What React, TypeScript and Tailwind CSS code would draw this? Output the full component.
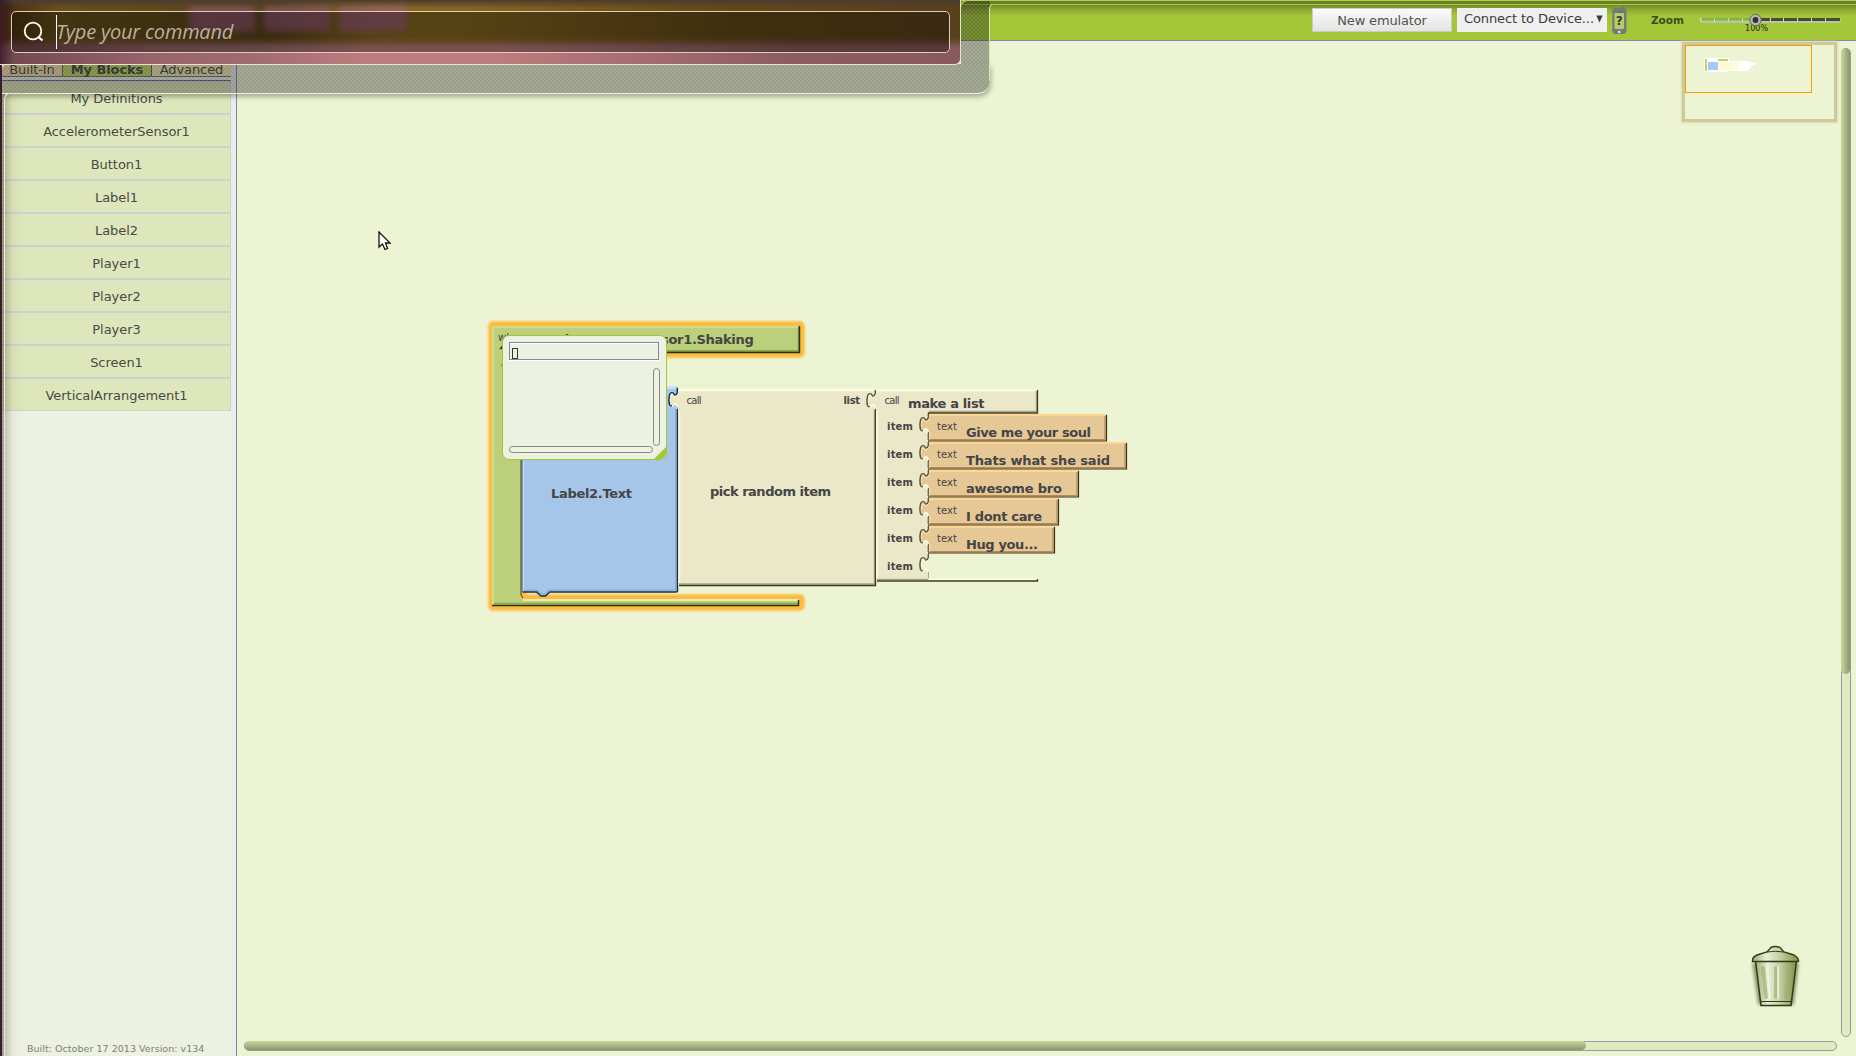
import React from "react";

const drawers = [
  "My Definitions",
  "AccelerometerSensor1",
  "Button1",
  "Label1",
  "Label2",
  "Player1",
  "Player2",
  "Player3",
  "Screen1",
  "VerticalArrangement1",
];

const items = [
  { label: "Give me your soul", right: 1106, width: 125 },
  { label: "Thats what she said", right: 1126, width: 144 },
  { label: "awesome bro", right: 1078, width: 96 },
  { label: "I dont care", right: 1058, width: 76 },
  { label: "Hug you...", right: 1054, width: 72 },
];

const dots =
  "bg-[radial-gradient(circle_at_1px_1px,rgba(255,255,255,0.09)_0.8px,transparent_1px),radial-gradient(circle_at_3px_3px,rgba(255,255,255,0.09)_0.8px,transparent_1px)] bg-[length:4px_4px]";

function Header() {
  return (
    <header className="flex h-[41px] w-full shrink-0 items-start justify-end border-b border-[#7b8a9c] bg-[#a4c639] bg-[linear-gradient(#b1d24a_0px,#b1d24a_1px,#6b7f2b_1px,#6b7f2b_4px,#a9cc42_4px,#a9cc42_5px,#72892b_5px,#8fad33_10px,#a4c639_16px)] pt-[8px] pr-[13px]">
      <button className="h-6 w-[140px] border border-[#c9cdc0] bg-gradient-to-b from-[#fafafa] to-[#e4e4e4] text-[13px] leading-[23px] tracking-[-0.15px] text-[#50524f]">
        New emulator
      </button>
      <div className="ml-[5px] flex h-6 w-[150px] items-center justify-between bg-[#efefef] pr-[4px] pb-[3px] pl-[7px] text-[13px] whitespace-nowrap text-[#3c3c3c]">
        <span className="tracking-[-0.1px]">Connect to Device...</span>
        <svg width="7" height="8" viewBox="0 0 7 8">
          <path d="M0.3 0.5h6.4L3.5 7.5z" fill="#3c3c3c" />
        </svg>
      </div>
      <svg className="-mt-[2px] ml-[5px]" width="15" height="28" viewBox="0 0 15 28">
        <path d="M2 2H10V0.5H13V2.2L14.5 4V25.5L12.5 28H2L0.3 25.5V4Z" fill="#777a74" />
        <rect x="2.5" y="7" width="9.5" height="16" rx="1" fill="#b4cd6a" />
        <path d="M7 6h1M9 6h1" stroke="#444" />
        <circle cx="7.3" cy="26" r="1.3" fill="#e8ece0" />
        <text x="7.2" y="19" textAnchor="middle" fontSize="12" fontWeight="bold" fill="#35392c">?</text>
      </svg>
      <span className="mt-[5px] ml-[24px] w-[32px] text-[10.5px] leading-[15px] font-bold text-[#3f4b20]">Zoom</span>
      <svg className="ml-[16px]" width="144" height="26" viewBox="1699 8 144 26">
        <rect x="1700" y="18" width="141" height="5" rx="2.5" fill="#b9c59b" />
        <rect x="1702" y="18" width="52" height="2.500" fill="#84b440" />
        <rect x="1755" y="18" width="85" height="3" fill="#45483f" />
        <path d="M1700.500 18v4M1714.500 18v4M1728.500 18v4M1742.500 18v4M1770.500 18v4M1783.500 18v4M1797.500 18v4M1811.500 18v4M1825.500 18v4" stroke="#cfdaaf" />
        <text x="1745" y="31" fontSize="8" textLength="23" fill="#252c14">100%</text>
        <circle cx="1755.500" cy="20" r="5.700" fill="#b6b8b2" stroke="#666961" />
        <circle cx="1755.500" cy="20" r="2.900" fill="#30302f" />
      </svg>
    </header>
  );
}

function Sidebar() {
  return (
    <aside className="flex w-[231px] shrink-0 flex-col bg-[#edf1e0] pl-[2px]">
      <div className="flex h-9 items-end border-b border-[#74768a] text-[13px] leading-[23px] tracking-[-0.1px] text-[#494a44]">
        <div className="h-[18px] w-[60px] bg-[#f3dfae] text-center">Built-In</div>
        <div className="h-[18px] w-[90px] border-x border-[#66685c] bg-[#c0da67] text-center font-bold">My Blocks</div>
        <div className="h-[18px] flex-1 bg-[#f3e8b4] text-center">Advanced</div>
      </div>
      <div className="h-1 border-b border-[#74768a] bg-[#edf1e0]" />
      <ul>
        {drawers.map((d) => (
          <li
            key={d}
            className="h-[33px] border border-l-0 border-[#cfd1cf] bg-[#dee7bb] pt-[1px] pl-[1px] text-center text-[13px] leading-[31px] tracking-[-0.04px] text-[#484a45]"
          >
            {d}
          </li>
        ))}
      </ul>
      <p className="mt-auto pl-[25px] text-[9.5px] leading-[14px] tracking-[0.04px] whitespace-nowrap text-[#7c7f78]">
        Built: October 17 2013 Version: v134
      </p>
    </aside>
  );
}

/* Puzzle-shaped connector hanging left of the edge x, starting at y. */
function Plug({ x, y, fill, light = "#fffbe0", dark = "#55523c" }: { x: number; y: number; fill: string; light?: string; dark?: string }) {
  return (
    <g transform={`translate(${x} ${y})`} fill="none">
      <path d="M1 1V4Q0 7-2.500 6.500Q-4 4-6 4Q-8 5-8 9V12Q-8 17-5.500 17Q-4.500 13.500-2 14Q0 15 1 18Z" fill={fill} />
      <path d="M0.300 18Q-0.500 15-2 14.800Q-4 15-4.500 18" stroke={light} strokeWidth="1.500" />
      <path d="M0.300 0V3.500Q-0.500 6.500-2.500 6L-3.500 4Q-6.500 2.500-7.500 6Q-8.700 12-7.500 15.500Q-6.500 17.500-5 16.500" stroke={dark} strokeWidth="1.300" />
      <path d="M1.200 5Q-0.500 8-3 7.500Q-5 4.500-6.300 7V12" stroke={light} strokeWidth="0.900" opacity="0.700" />
    </g>
  );
}

function Blocks() {
  const bold = { fontWeight: "bold", fontSize: 13 } as const;
  return (
    <svg className="absolute top-[269px] left-[243px]" width="680" height="310" viewBox="480 310 680 310">
      <defs>
        <filter id="glow" x="-5%" y="-5%" width="110%" height="110%">
          <feGaussianBlur stdDeviation="0.9" />
        </filter>
      </defs>
      <path d="M493 326H800V353H522V599H800V606H493Z" fill="none" stroke="#fdbb3d" strokeWidth="9.500" strokeLinejoin="round" filter="url(#glow)" />
      <path d="M492 326H800V352H521V599H799V605H492Z" fill="#bccf7b" />
      <path d="M493 605V327H799" fill="none" stroke="#d2e293" strokeWidth="1.500" />
      <path d="M523 600H798" stroke="#e2edb4" strokeWidth="2" />
      <path d="M494 603.500H798" stroke="#8ea655" strokeWidth="1.500" />
      <path d="M798.500 327V351H640" fill="none" stroke="#7f984a" strokeWidth="1.500" />
      <path d="M799.500 326V352.500H640M492 605.500H798.500V600" fill="none" stroke="#26300c" strokeWidth="1.400" />
      <path d="M521 455V595L523 598" fill="none" stroke="#3c4a1c" />
      <g fill="#454545">
        <text x="498" y="340.500" fontSize="10">when</text>
        <text x="753.500" y="344" textAnchor="end" letterSpacing="-0.3" {...bold}>AccelerometerSensor1.Shaking</text>
        <text x="501" y="367.500" fontSize="10">do</text>
      </g>
      <path d="M499.500 349L504 343V349Z" fill="#251600" stroke="#d14716" strokeWidth="0.400" />

      <path d="M522 388Q522 386 524 386H676Q678 386 678 388V592H550L545 596H541L536 592H522Z" fill="#a6c6e9" />
      <path d="M660 387.500H676" stroke="#c3e0ff" strokeWidth="3" />
      <path d="M523.500 450V591" stroke="#c4ddf6" />
      <path d="M676 409V590H549L545 594H541L537 590H524" fill="none" stroke="#7fa3cb" strokeWidth="1.200" />
      <path d="M677.500 388V392M677.500 409V591.500Q677 592 675 592H550L545.500 596H541L536.500 592H522.500" fill="none" stroke="#1c2c42" strokeWidth="1.400" />
      <path d="M522 450V592" stroke="#4a6789" />

      <rect x="678" y="389" width="198" height="197" fill="#ebe7c9" />
      <path d="M678 390H875" stroke="#fffbe0" strokeWidth="2.500" />
      <path d="M679.500 410V583" stroke="#f8f4da" strokeWidth="1.500" />
      <path d="M679 584H874.500V410" fill="none" stroke="#aaa587" strokeWidth="1.500" />
      <path d="M679 585.500H875.500V409" fill="none" stroke="#3e3b2a" strokeWidth="1.300" />

      <path d="M876 390H1038V413H929V579H1038V581H876Z" fill="#ebe7c9" />
      <path d="M876 390.500H1037" stroke="#fffbe0" strokeWidth="2" />
      <path d="M877 410V579M929 579.500H1037" stroke="#fffbe0" strokeWidth="1.500" />
      <path d="M1036.500 391V411.500H929M877 579.500H928" fill="none" stroke="#aaa587" strokeWidth="1.500" />
      <path d="M1037.500 390V413H928.500V415M877 581H1037.500V579" fill="none" stroke="#3e3b2a" strokeWidth="1.300" />

      <Plug x={677} y={389} fill="#ebe7c9" dark="#1c2c42" />
      <Plug x={875} y={390} fill="#ebe7c9" />

      {items.map((it, i) => {
        const y = 414 + i * 28;
        return (
          <g key={it.label}>
            <path d={`M928.500 ${y + 17}V${y + 28}`} stroke="#6e6b56" />
            <path d={`M927.500 ${y + 19}V${y + 26}`} stroke="#b9b598" />
            <rect x="929" y={y} width={it.right - 928} height="27" fill="#e6c796" />
            <path d={`M929 ${y + 1}H${it.right}`} stroke="#ffd58f" strokeWidth="2" />
            <path d={`M930 ${y + 18}V${y + 25}`} stroke="#f5dcaf" />
            <path d={`M930 ${y + 25.5}H${it.right - 1}V${y + 2}`} fill="none" stroke="#b18a55" strokeWidth="1.200" />
            <path d={`M929 ${y + 27}H${it.right + 0.5}V${y + 1}`} fill="none" stroke="#3e2e13" strokeWidth="1.200" />
            <Plug x={928} y={y} fill="#e6c796" />
            <g fill="#454545">
              <text x="937" y={y + 15.5} fontSize="10" textLength="20">text</text>
              <text x="966" y={y + 23} textLength={it.width} {...bold}>{it.label}</text>
            </g>
          </g>
        );
      })}
      <Plug x={928} y={554} fill="#edf4d4" />
      <path d="M928.500 572V578" stroke="#aaa587" />
      <g fill="#454545">
        {[0, 1, 2, 3, 4, 5].map((i) => (
          <text key={i} x="887" y={429.5 + i * 28} fontSize="10" fontWeight="bold" textLength="26">item</text>
        ))}
        <text x="686.500" y="404" fontSize="10" textLength="15">call</text>
        <text x="843.500" y="404" fontSize="10" fontWeight="bold" textLength="16.500">list</text>
        <text x="884.500" y="404" fontSize="10" textLength="15">call</text>
        <text x="908" y="408" textLength="76.500" {...bold}>make a list</text>
        <text x="710" y="496" textLength="121" {...bold}>pick random item</text>
        <text x="551" y="498" textLength="81" {...bold}>Label2.Text</text>
      </g>
    </svg>
  );
}

function Popup() {
  return (
    <div className="absolute top-[294px] left-[265px] flex h-[125px] w-[165px] flex-col overflow-hidden rounded-[7px] border border-[#a4c639] bg-[#edf1e0] px-[6px] pt-[6px] pb-[6px]">
      <div className="h-[18px] w-[150px] border border-[#7a8aa0] pt-[5px] pl-[2px] shadow-[inset_0_1px_0_#fff,0_1px_0_#fff]">
        <div className="h-[11px] w-[6px] border border-[#333]" />
      </div>
      <div className="mt-[8px] h-[78px] w-[7px] self-end rounded-full border border-[#85887e]" />
      <div className="h-[7px] w-[144px] rounded-full border border-[#85887e]" />
      <div className="absolute right-0 bottom-0 h-3 w-3 bg-[#a4c639] [clip-path:polygon(100%_0,100%_100%,0_100%)]" />
    </div>
  );
}

function MiniMap() {
  return (
    <div className="absolute top-[1px] left-[1445px] h-[80px] w-[155px] border-[3px] border-[#cdca98] bg-[#edf4d4] shadow-[0_0_2px_1px_#dbdcb0]">
      <div className="h-[48px] w-[127px] border border-[#ff9a00]">
        <svg width="60" height="30" viewBox="1691 50 60 30" className="mt-[4px] ml-[5px] overflow-visible">
          <path d="M1704 58H1729V61H1748L1749 62L1755 63V65L1751 66V68L1748 70V71H1728V72H1704Z" fill="#fff" />
          <path d="M1705 59h2v12h-2zM1718 59h10v2h-10z" fill="#bdd56c" />
          <path d="M1708 62h10v8h-10z" fill="#a3cbfa" />
          <path d="M1718 62h16v8h-16zM1735 62h3v8h-3z" fill="#fff9d5" />
        </svg>
      </div>
    </div>
  );
}

function Trash() {
  return (
    <svg className="absolute top-[904px] left-[1511px]" width="56" height="62" viewBox="1748 945 56 62">
      <defs>
        <linearGradient id="can">
          <stop offset="0" stopColor="#9cab6e" />
          <stop offset="0.3" stopColor="#e9eeda" />
          <stop offset="0.6" stopColor="#c3cfa0" />
          <stop offset="1" stopColor="#7d9047" />
        </linearGradient>
        <filter id="soft"><feGaussianBlur stdDeviation="1.5" /></filter>
      </defs>
      <path d="M1752 963H1799L1794 1005H1758Z" fill="#59633a" opacity="0.6" filter="url(#soft)" />
      <path d="M1755.500 961H1796.500L1791 1005.500H1761Z" fill="url(#can)" stroke="#2f3b14" strokeWidth="1.500" />
      <path d="M1763 968L1766 997M1776 968V997M1789 968L1786 997" stroke="#a0b06f" strokeWidth="4" strokeLinecap="round" opacity="0.65" />
      <path d="M1767 967L1770 998M1778 967V998" stroke="#f1f4e4" strokeWidth="2" strokeLinecap="round" opacity="0.8" />
      <path d="M1761 1001.500H1791.500" stroke="#2f3b14" />
      <path d="M1752.500 961.500Q1752 957 1757 955L1767 952L1771 947.500Q1775 945.500 1780 947.500L1784 952L1794 955Q1799 958 1798.500 961.500Z" fill="url(#can)" stroke="#2f3b14" strokeWidth="1.400" />
      <path d="M1767 952Q1775 950.500 1784 952" fill="none" stroke="#2f3b14" />
    </svg>
  );
}

function Hud() {
  return (
    <>
      {/* translucent frame around the launcher */}
      <div className={`absolute top-[64px] left-[2px] h-[30px] w-[988px] rounded-tl-[6px] rounded-br-[13px] border-b border-[#eef3da] bg-[#00000059] shadow-[1px_3px_5px_#0000004d] ${dots}`} />
      <div className={`absolute top-0 left-[960px] h-[64px] w-[30px] rounded-tl-[8px] border-t border-l border-[#b1d24a] bg-[#00000059] ${dots}`} />
      <div className="absolute top-[41px] left-[960px] h-[23px] w-[1px] bg-[#eef3da]" />
      <div className="absolute top-[4px] left-[989px] h-[77px] w-[8px] rounded-tl-[5px] border-t border-l border-t-[#a9cc42] border-l-[#dbe8ae]" />
      <div className={`absolute top-[94px] left-[2px] h-[962px] w-[3px] bg-[#00000059] ${dots}`} />
      <div className="absolute top-[93px] left-[4px] h-[970px] w-[20px] rounded-tl-[6px] border-t border-l border-[#e5ecd0] bg-gradient-to-r from-[#00000030] via-[#00000008] via-40% to-transparent" />
      <div className="absolute top-0 left-0 h-[1056px] w-[2px] bg-[#3a1c2c]" />
      {/* launcher */}
      <div className="absolute top-0 left-0 h-[65px] w-[961px] overflow-hidden rounded-br-[6px] border-r border-b border-[#e9e3cd] bg-[linear-gradient(90deg,#70474e,#98626b_15%,#a06b6f_26%,#bd7c7d_38%,#bd7c7d_52%,#8d5c61_82%,#8a595e)]">
        <div className="absolute -top-[10px] left-0 h-[53px] w-[970px] bg-[linear-gradient(90deg,#48290f,#685019_6%,#574319_28%,#876720_39%,#85651f_48%,#634817_75%,#593f1b)] blur-[3px]" />
        <div className="absolute top-0 left-0 h-[8px] w-full bg-gradient-to-b from-[#4a3c30] to-transparent" />
        <div className="absolute top-[7px] left-[189px] flex gap-[9px] opacity-80 blur-[3px]">
          <div className="h-6 w-[66px] bg-[#90566e]" />
          <div className="h-6 w-[66px] bg-[#90566e]" />
          <div className="h-6 w-[68px] bg-[#985b76]" />
        </div>
        <div className="absolute inset-y-0 left-0 w-[14px] bg-gradient-to-r from-[#2d1020b0] to-transparent" />
        <div className="relative mt-[11px] ml-[11px] flex h-[42px] w-[939px] items-center rounded-[5px] border border-[#d8d0c0] bg-[#00000058]">
          <svg width="22" height="22" viewBox="0 0 22 22" className="ml-[11px]" fill="none" stroke="#fff" strokeWidth="1.800">
            <circle cx="10" cy="10" r="8.300" />
            <path d="M15.500 16L19.500 19.500" strokeWidth="2.300" />
          </svg>
          <div className="ml-[11px] h-[34px] w-px bg-white" />
          <span className="-ml-[1px] font-['Open_Sans'] text-[20px] leading-[36px] tracking-[-0.2px] text-[#bdb09f] italic">Type your command</span>
        </div>
      </div>
    </>
  );
}

function Pointer() {
  return (
    <svg className="absolute top-[190px] left-[141px]" width="14" height="20" viewBox="0 0 14 20">
      <path d="M1 1V16L4.500 13L7 18.500L9.500 17.500L7.500 12H12Z" fill="#fff" stroke="#111" strokeWidth="1.300" />
    </svg>
  );
}

export default function App() {
  return (
    <div className="relative flex h-[1056px] w-[1856px] flex-col overflow-hidden bg-[#edf4d4] font-['DejaVu_Sans',sans-serif]">
      <Header />
      <div className="flex min-h-0 flex-1">
        <Sidebar />
        <div className="w-[6px] shrink-0 border-r border-[#7a8ba2] bg-[#ededed]" />
        <main className="relative flex flex-1 flex-col gap-1 pt-[7px] pr-[5px] pb-[5px] pl-[7px]">
          <div className="w-[10px] flex-1 self-end rounded-full border border-[#999b99] bg-[#e0eabf]">
            <div className="-mt-px -ml-px h-[626px] w-[9px] rounded-full bg-gradient-to-r from-[#cbd8a2] to-[#8b966b]" />
          </div>
          <div className="h-[10px] w-[1593px] rounded-full border border-[#999b99] bg-[#e0eabf]">
            <div className="-mt-px -ml-px h-[9px] w-[1342px] rounded-full bg-gradient-to-b from-[#cbd8a2] to-[#8b966b]" />
          </div>
          <Blocks />
          <Popup />
          <MiniMap />
          <Trash />
          <Pointer />
        </main>
      </div>
      <Hud />
    </div>
  );
}
